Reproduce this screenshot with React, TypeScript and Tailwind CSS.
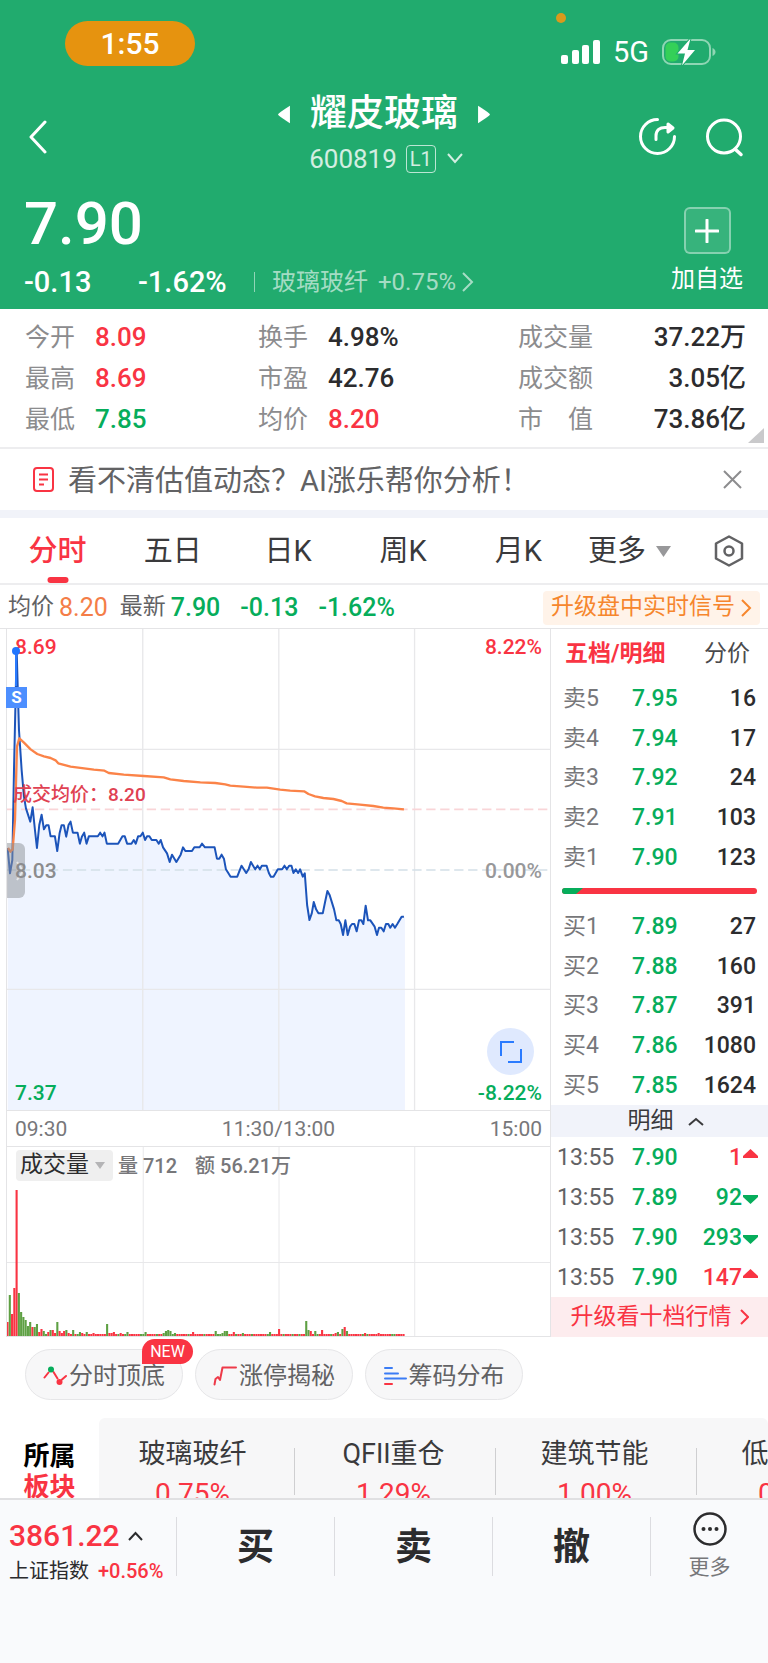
import { useState } from "react";
import clsx from "clsx";

type Trend = "up" | "down";

const stats = [
  [
    { label: "今开", value: "8.09", color: "text-[#f93443]" },
    { label: "最高", value: "8.69", color: "text-[#f93443]" },
    { label: "最低", value: "7.85", color: "text-[#06ad5b]" },
  ],
  [
    { label: "换手", value: "4.98%", color: "text-[#2c2c2e]" },
    { label: "市盈", value: "42.76", color: "text-[#2c2c2e]" },
    { label: "均价", value: "8.20", color: "text-[#f93443]" },
  ],
];

const totals = [
  { label: "成交量", value: "37.22万" },
  { label: "成交额", value: "3.05亿" },
  { label: "市　值", value: "73.86亿" },
];

const tabs = ["分时", "五日", "日K", "周K", "月K"];

const asks = [
  ["卖5", "7.95", "16"],
  ["卖4", "7.94", "17"],
  ["卖3", "7.92", "24"],
  ["卖2", "7.91", "103"],
  ["卖1", "7.90", "123"],
];

const bids = [
  ["买1", "7.89", "27"],
  ["买2", "7.88", "160"],
  ["买3", "7.87", "391"],
  ["买4", "7.86", "1080"],
  ["买5", "7.85", "1624"],
];

const ticks: { time: string; price: string; volume: string; trend: Trend }[] = [
  { time: "13:55", price: "7.90", volume: "1", trend: "up" },
  { time: "13:55", price: "7.89", volume: "92", trend: "down" },
  { time: "13:55", price: "7.90", volume: "293", trend: "down" },
  { time: "13:55", price: "7.90", volume: "147", trend: "up" },
];

const sectors = [
  { name: "玻璃玻纤", change: "0.75%" },
  { name: "QFII重仓", change: "1.29%" },
  { name: "建筑节能", change: "1.00%" },
  { name: "低碳经济", change: "0.83%" },
];

const pricePoints =
  "21,684 28,760 35,720 40,450 48,91 55,330 63,450 70,530 76,565 89,605 96,562 103,630 109,684 116,615 123,584 130,628 137,616 144,616 150,649 163,649 170,693 177,640 183,616 190,616 197,650 204,615 210,605 217,638 231,638 238,671 244,650 251,638 258,671 265,649 292,649 299,638 306,649 312,638 319,671 353,671 366,649 373,649 380,671 393,671 400,660 406,671 413,649 420,649 427,638 434,660 440,649 447,649 454,660 468,660 475,671 481,660 488,682 500,700 508,726 515,704 528,726 541,704 548,682 555,693 575,693 582,682 598,682 605,671 614,682 643,682 650,716 657,716 664,704 671,716 677,748 691,770 711,770 724,737 738,759 745,748 752,726 765,748 772,737 779,748 785,737 799,737 806,759 812,770 820,770 833,748 846,748 853,737 860,748 867,737 874,737 880,759 887,748 894,759 900,748 908,770 914,760 921,855 928,900 935,880 941,846 948,868 955,880 968,880 975,846 982,813 989,826 1002,868 1009,901 1016,901 1022,912 1029,945 1036,901 1043,945 1050,920 1056,912 1063,912 1070,934 1077,901 1084,901 1090,912 1097,857 1104,901 1111,901 1124,920 1131,945 1137,923 1144,923 1151,934 1158,912 1165,912 1171,923 1178,912 1185,923 1192,912 1205,890 1212,890";

const averagePoints =
  "22,684 29,695 36,688 43,600 49,380 56,355 70,368 90,388 110,402 130,409 150,414 165,421 173,430 210,440 280,449 312,452 325,459 370,464 430,468 490,472 510,478 550,483 600,487 645,489 675,493 690,497 730,500 770,503 800,503 840,509 870,512 912,514 925,522 945,529 970,534 1000,537 1025,543 1040,550 1080,554 1120,558 1150,563 1180,565 1212,568";

// minutes that stand out of the flat volume: index -> [height, trend]
const volumePeaks: Record<number, [number, Trend]> = {
  0: [14, "up"], 1: [41, "down"], 2: [22, "up"], 3: [48, "up"], 4: [146, "up"],
  5: [43, "down"], 6: [24, "down"], 7: [19, "down"], 8: [16, "down"], 9: [10, "down"],
  10: [14, "down"], 11: [9, "up"], 12: [9, "down"], 13: [12, "down"], 14: [4, "up"],
  15: [7, "up"], 16: [5, "down"], 18: [4, "up"], 19: [6, "down"], 20: [6, "up"], 21: [3, "up"],
  22: [14, "down"], 23: [5, "up"], 24: [3, "up"], 25: [5, "up"], 26: [6, "down"], 27: [3, "up"],
  29: [6, "down"], 32: [4, "down"], 33: [3, "up"], 35: [4, "down"], 38: [3, "up"], 44: [12, "down"],
  45: [3, "up"], 46: [3, "up"], 47: [4, "up"], 50: [3, "up"], 53: [4, "down"], 61: [4, "down"],
  69: [3, "down"], 70: [5, "down"], 71: [6, "down"], 72: [5, "down"], 74: [3, "down"],
  82: [4, "up"], 92: [5, "down"], 95: [3, "down"], 96: [5, "down"], 97: [5, "down"],
  100: [4, "up"], 104: [3, "down"], 116: [4, "down"], 120: [7, "up"], 132: [15, "down"],
  133: [6, "down"], 134: [5, "up"], 136: [5, "down"], 139: [6, "up"], 145: [3, "up"],
  146: [4, "down"], 148: [7, "down"], 149: [9, "up"], 150: [5, "down"], 158: [3, "up"], 164: [3, "up"],
};

const volumes = Array.from({ length: 176 }, (_, i): [number, Trend] =>
  volumePeaks[i] ?? [2, i % 7 === 3 || i % 11 === 5 ? "down" : "up"]
);

function StatusBar() {
  return (
    <div className="flex h-[88px] items-start justify-between pl-[65px] pr-[52px] pt-[21px]">
      <span className="flex h-[45px] w-[130px] items-center justify-center rounded-full bg-[#e6930f] pt-px text-[30px] leading-none font-medium">
        1:55
      </span>
      <div className="relative flex items-center gap-[13px] pt-[18px]">
        <span className="absolute -top-2 -left-[5px] size-[10px] rounded-full bg-[#d99a1c]" />
        <svg width="39" height="25" viewBox="0 0 39 25" fill="white">
          <rect x="0" y="15" width="7" height="9" rx="2" />
          <rect x="11" y="10" width="7" height="14" rx="2" />
          <rect x="21" y="5" width="7" height="19" rx="2" />
          <rect x="32" y="0" width="7" height="24" rx="2" />
        </svg>
        <span className="text-[29px] leading-[26px]">5G</span>
        <svg width="54" height="26" viewBox="0 0 54 26">
          <rect x="1" y="1" width="47" height="24" rx="8" fill="none" stroke="#8fd6b4" strokeWidth="2" />
          <path d="M50.500 9c4 1.500 4 6.500 0 8z" fill="#8fd6b4" />
          <rect x="3.500" y="3.500" width="13" height="19" rx="5" fill="#34d058" />
          <path d="M28.500-.500 15.500 14.500H23L20 26.500 33 11h-7.500z" fill="white" stroke="#21ab6e" strokeWidth="2" paintOrder="stroke" />
        </svg>
      </div>
    </div>
  );
}

function Header() {
  return (
    <header className="bg-[#21ab6e] text-white">
      <StatusBar />
      <div className="grid grid-cols-[1fr_auto_1fr] items-center px-6">
        <button aria-label="返回" className="w-fit p-1 pt-2">
          <svg width="20" height="34" viewBox="0 0 20 34" fill="none" stroke="white" strokeWidth="3" strokeLinecap="round" strokeLinejoin="round">
            <path d="M17 2 3 17l14 15" />
          </svg>
        </button>
        <div className="flex flex-col items-center">
          <div className="flex items-center gap-[19px]">
            <button aria-label="上一只">
              <svg width="13" height="19" viewBox="0 0 12 17" fill="white"><path d="M11 .500v16Q0 9.500 0 8.500T11 .500z" /></svg>
            </button>
            <h1 className="text-[37px] leading-[52px] font-medium">耀皮玻璃</h1>
            <button aria-label="下一只">
              <svg width="13" height="19" viewBox="0 0 12 17" fill="white"><path d="M1 .500v16Q12 9.500 12 8.500T1 .500z" /></svg>
            </button>
          </div>
          <button className="flex items-center gap-[9px] pb-1 pl-1 text-[26px] leading-[38px] text-white/80">
            600819
            <span className="flex h-7 w-[30px] items-center justify-center rounded border border-white/70 text-xl leading-none">L1</span>
            <svg width="16" height="12" viewBox="0 0 16 12" fill="none" stroke="currentColor" strokeWidth="2" className="ml-[2px]">
              <path d="m1 1 7 8 7-8" />
            </svg>
          </button>
        </div>
        <div className="flex justify-end gap-[28px] pt-1">
          <button aria-label="分享">
            <svg width="40" height="40" viewBox="0 0 40 40" fill="none" stroke="white" strokeWidth="3" strokeLinecap="round" strokeLinejoin="round">
              <path d="M21.500 2.500A17 17 0 1 0 38.500 19.500" />
              <path d="M20 22.500v-3.500c0-6 4-8.500 9-8.500h5" />
              <path d="m32 7 5 4-5 4z" fill="white" />
            </svg>
          </button>
          <button aria-label="搜索">
            <svg width="40" height="40" viewBox="0 0 40 40" fill="none" stroke="white" strokeWidth="3" strokeLinecap="round">
              <circle cx="20" cy="19.500" r="16.500" />
              <path d="m31.500 32.500 5.500 5" strokeWidth="3.500" />
            </svg>
          </button>
        </div>
      </div>
      <div className="flex h-[127px] items-end justify-between pb-[10px] pl-6 pr-[25px]">
        <div className="flex flex-col">
          <strong className="text-[60px] leading-[66px] font-medium">7.90</strong>
          <div className="mt-2 flex h-[34px] items-center text-[29px] leading-[34px] font-medium">
            <span className="w-[114px]">-0.13</span>
            <span className="w-[116px]">-1.62%</span>
            <span className="mr-[17px] h-5 w-px bg-white/50" />
            <a href="#sector" className="flex items-center text-2xl font-normal text-white/60">
              玻璃玻纤
              <span className="ml-[10px]">+0.75%</span>
              <svg width="12" height="20" viewBox="0 0 12 20" fill="none" stroke="currentColor" strokeWidth="2" className="ml-[6px]">
                <path d="m1 1 9 9-9 9" />
              </svg>
            </a>
          </div>
        </div>
        <button className="flex flex-col items-center gap-2 pb-[3px] text-2xl leading-[34px]">
          <span className="flex size-[47px] items-center justify-center rounded-md border-2 border-white/40 bg-white/10">
            <svg width="24" height="24" viewBox="0 0 24 24" stroke="white" strokeWidth="3" strokeLinecap="round">
              <path d="M12 1v22M1 12h22" />
            </svg>
          </span>
          加自选
        </button>
      </div>
    </header>
  );
}

function Stats() {
  return (
    <section className="relative grid grid-cols-[233fr_260fr_228fr] border-b-2 border-[#ededef] bg-white pt-2 pb-[7px] pl-[25px] pr-[22px] text-[26px]">
      {stats.map((column, i) => (
        <dl key={i}>
          {column.map((item) => (
            <div key={item.label} className="flex h-[41px] items-center gap-5">
              <dt className="text-[25px] text-[#8c8c8e]">{item.label}</dt>
              <dd className={clsx("font-medium", item.color)}>{item.value}</dd>
            </div>
          ))}
        </dl>
      ))}
      <dl>
        {totals.map((item) => (
          <div key={item.label} className="flex h-[41px] items-center justify-between">
            <dt className="text-[25px] text-[#8c8c8e]">{item.label}</dt>
            <dd className="font-medium text-[#2c2c2e]">{item.value}</dd>
          </div>
        ))}
      </dl>
      <svg width="16" height="15" viewBox="0 0 16 15" className="absolute right-1 bottom-1" fill="#c9c9cb"><path d="M16 0v15H0z" /></svg>
    </section>
  );
}

function Notice({ onClose }: { onClose: () => void }) {
  return (
    <section className="flex h-[61px] items-center bg-white pl-[33px] pr-[26px]">
      <svg width="21" height="25" viewBox="0 0 21 25" fill="none" stroke="#f93443" strokeWidth="2">
        <rect x="1" y="1" width="19" height="23" rx="3" />
        <path d="M6 7.500h9M6 12.500h9M6 17.500h5" />
      </svg>
      <a href="#ai" className="ml-[14px] pt-[2px] text-[29px] leading-10 text-[#626264]">看不清估值动态？AI涨乐帮你分析！</a>
      <button aria-label="关闭" className="ml-auto">
        <svg width="19" height="19" viewBox="0 0 19 19" stroke="#8c8c8e" strokeWidth="2"><path d="m1 1 17 17M18 1 1 18" /></svg>
      </button>
    </section>
  );
}

function ChartTabs({ active, onChange }: { active: string; onChange: (tab: string) => void }) {
  return (
    <nav className="grid h-[67px] grid-cols-[repeat(6,3fr)_2fr] border-b-2 border-[#ededef] bg-white text-[29px] text-[#3a3a3c]">
      {tabs.map((tab) => (
        <button
          key={tab}
          onClick={() => onChange(tab)}
          className={clsx("relative pt-[2px]", tab === active && "font-medium text-[#f93443]")}
        >
          {tab}
          {tab === active && (
            <span className="absolute bottom-0 left-1/2 h-[6px] w-[21px] -translate-x-1/2 rounded-full bg-[#f93443]" />
          )}
        </button>
      ))}
      <button className="flex items-center justify-center gap-[10px] pt-[2px] pr-2">
        更多
        <svg width="15" height="11" viewBox="0 0 15 11" fill="#98989a"><path d="M0 0h15L7.500 11z" /></svg>
      </button>
      <button aria-label="设置" className="flex items-center justify-center pr-[2px]">
        <svg width="30" height="32" viewBox="0 0 30 32" fill="none" stroke="#626264" strokeWidth="2.500" strokeLinejoin="round">
          <path d="M15 1.500 28 8.500v15l-13 7-13-7v-15z" />
          <circle cx="15" cy="16" r="4.500" />
        </svg>
      </button>
    </nav>
  );
}

function QuoteLine() {
  return (
    <div className="flex h-[43px] items-center bg-white px-2 pt-[2px] text-[25px]">
      <span className="text-[23px] text-[#626264]">均价</span>
      <span className="ml-[5px] text-[#f47d47]">8.20</span>
      <span className="ml-3 text-[23px] text-[#626264]">最新</span>
      <span className="ml-[5px] flex gap-5 font-medium text-[#06ad5b]">
        <span>7.90</span>
        <span>-0.13</span>
        <span>-1.62%</span>
      </span>
      <a href="#signal" className="ml-auto flex h-[34px] items-center gap-[6px] rounded bg-[#fff3e9] px-2 text-[23px] text-[#f6862d]">
        升级盘中实时信号
        <svg width="11" height="18" viewBox="0 0 11 18" fill="none" stroke="currentColor" strokeWidth="2"><path d="m1 1 8 8-8 8" /></svg>
      </a>
    </div>
  );
}

function PriceChart() {
  return (
    <div className="relative h-[481px] text-[21px] leading-6 font-medium">
      <svg className="absolute inset-0 size-full" viewBox="19 27 1632 1443" preserveAspectRatio="none" fill="none">
        <polygon points={`21,1470 ${pricePoints} 1215,890 1215,1470`} fill="#eff4ff" />
        <path d="M427 27v1443M836 27v1443M1244 27v1443M19 388h1632M19 1108h1632" stroke="#e8e8ea" strokeWidth="4" />
        <path d="M19 568h1632" stroke="#f9d5d8" strokeWidth="5" strokeDasharray="28 14" />
        <path d="M19 750h1632" stroke="#d3dfe8" strokeWidth="5" strokeDasharray="28 14" />
        <polyline points={pricePoints} stroke="#1c54ba" strokeWidth="6" strokeLinejoin="round" />
        <polyline points={averagePoints} stroke="#fb8348" strokeWidth="7" strokeLinejoin="round" />
      </svg>
      <span className="absolute top-[6px] left-2 text-[#f93443]">8.69</span>
      <span className="absolute top-[6px] right-2 text-[#f93443]">8.22%</span>
      <span className="absolute top-[154px] left-[6px] text-[19px] text-[#e04152]">成交均价：8.20</span>
      <button aria-label="展开" className="absolute top-[214px] left-0 flex h-[55px] w-[18px] items-center justify-end rounded-r-md bg-[#8c8f96]/50">
        <svg width="9" height="20" viewBox="0 0 9 20" fill="none" stroke="white" strokeOpacity=".6" strokeWidth="2"><path d="m1 1 6 9-6 9" /></svg>
      </button>
      <span className="absolute top-[230px] left-2 text-[#8c8c8e]">8.03</span>
      <span className="absolute top-[230px] right-2 text-[#98989a]">0.00%</span>
      <span className="absolute bottom-[5px] left-2 text-[#06ad5b]">7.37</span>
      <span className="absolute right-2 bottom-[5px] text-[#06ad5b]">-8.22%</span>
      <svg width="10" height="40" viewBox="0 0 10 40" className="absolute top-[17px] left-[4px]">
        <path d="M5 4v36" stroke="#2a7bff" strokeWidth="2" />
        <circle cx="5" cy="5" r="4" fill="#2176ff" />
      </svg>
      <span className="absolute top-[58px] -left-px flex size-[21px] items-center justify-center bg-[#4d8fff] text-[17px] leading-none font-bold text-white">S</span>
      <button aria-label="全屏" className="absolute right-4 bottom-[35px] flex size-[47px] items-center justify-center rounded-full bg-[#dfe9fe]">
        <svg width="22" height="22" viewBox="0 0 22 22" fill="none" stroke="#2a7bff" strokeWidth="2"><path d="M1 15V1h13M21 8v13H8" /></svg>
      </button>
    </div>
  );
}

function VolumeChart() {
  return (
    <div className="relative h-[189px]">
      <svg className="absolute inset-0 size-full" viewBox="0 0 544 189" preserveAspectRatio="none">
        <path d="M136.500 0v189M272.500 0v189M408.500 0v189M0 115.500h544" stroke="#e8e8ea" />
        {volumes.map(([height, trend], i) => (
          <rect key={i} x={i * 2.267 - 0.5} y={189 - height} width="2.100" height={height} fill={trend === "up" ? "#f93443" : "#5ea043"} />
        ))}
      </svg>
      <div className="relative flex items-center pt-[3px] pl-[9px] text-[20px] font-medium text-[#77777a]">
        <button className="flex h-[31px] items-center gap-[6px] rounded bg-[#efefef] pr-2 pl-1 text-[23px] font-normal text-[#2c2c2e]">
          成交量
          <svg width="10" height="7" viewBox="0 0 10 7" fill="#b4b4b6"><path d="M0 0h10L5 7z" /></svg>
        </button>
        <span className="ml-[5px]">量 712</span>
        <span className="ml-[18px]">额 56.21万</span>
      </div>
    </div>
  );
}

function BookTable({ rows, label }: { rows: string[][]; label: string }) {
  return (
    <table aria-label={label} className="h-[198px] w-full text-[23px] leading-none">
      <tbody>
        {rows.map(([level, price, volume]) => (
          <tr key={level}>
            <th scope="row" className="w-[81px] pl-3 text-left font-normal text-[#77777a]">{level}</th>
            <td className="font-medium text-[#06ad5b]">{price}</td>
            <td className="pr-3 text-right font-medium text-[#2c2c2e]">{volume}</td>
          </tr>
        ))}
      </tbody>
    </table>
  );
}

function OrderBook() {
  return (
    <aside className="flex w-[217px] shrink-0 flex-col text-[23px]">
      <div className="flex h-[50px] items-center justify-between pr-[18px] pl-[14px]">
        <button className="font-bold text-[#f93443]">五档/明细</button>
        <button className="text-[#4a4a4c]">分价</button>
      </div>
      <BookTable rows={asks} label="卖盘" />
      <div className="flex h-[30px] items-center pr-[11px] pb-[2px] pl-[11px]">
        <svg className="h-[6px] w-full rounded-full" viewBox="0 0 195 6" preserveAspectRatio="none">
          <rect width="195" height="6" fill="#f93443" />
          <path d="M0 0h21l-7 6H0z" fill="#06ad5b" />
        </svg>
      </div>
      <BookTable rows={bids} label="买盘" />
      <button className="flex h-[32px] items-center justify-center gap-[14px] bg-[#f1f3fa] pl-3 text-[#3a3a3c]">
        明细
        <svg width="16" height="9" viewBox="0 0 16 9" fill="none" stroke="currentColor" strokeWidth="2"><path d="m1 8 7-6 7 6" /></svg>
      </button>
      <table aria-label="明细" className="h-[160px] w-full leading-none">
        <tbody>
          {ticks.map((tick, i) => (
            <tr key={i}>
              <td className="w-[81px] pl-[6px] text-[#626264]">{tick.time}</td>
              <td className="font-medium text-[#06ad5b]">{tick.price}</td>
              <td className={clsx("pr-[10px] text-right font-medium", tick.trend === "up" ? "text-[#f93443]" : "text-[#06ad5b]")}>
                <span className="inline-flex items-center gap-px">
                  {tick.volume}
                  <svg width="15" height="9" viewBox="0 0 15 9" fill="currentColor" className={tick.trend === "up" ? "mb-2" : "mt-1"}>
                    {tick.trend === "up" ? <path d="M0 9h15v-2L7.500 0 0 7z" /> : <path d="M0 0h15v2L7.500 9 0 2z" />}
                  </svg>
                </span>
              </td>
            </tr>
          ))}
        </tbody>
      </table>
      <a href="#level2" className="flex h-[40px] items-center justify-center gap-2 bg-[#fdecee] text-[#f93443]">
        升级看十档行情
        <svg width="9" height="16" viewBox="0 0 9 16" fill="none" stroke="currentColor" strokeWidth="2"><path d="m1 1 7 7-7 7" /></svg>
      </a>
    </aside>
  );
}

function Tools() {
  const pill = "relative flex h-[51px] w-[158px] items-center justify-center gap-[2px] rounded-full border border-[#e6e6e8] bg-[#f7f7f8] pt-[2px]";
  return (
    <section className="flex gap-3 bg-white px-[25px] pt-3 pb-[18px] text-2xl text-[#626264]">
      <button className={pill}>
        <svg width="24" height="20" viewBox="0 0 24 20" fill="none" stroke="#f93443" strokeWidth="2" strokeLinecap="round">
          <path d="m1.500 11.500 4-5M10.500 6l4 6.500M19 13.500l4-3.500" />
          <circle cx="8" cy="3.500" r="3" fill="#06ad5b" stroke="none" />
          <circle cx="16.500" cy="16" r="3" fill="#f93443" stroke="none" />
        </svg>
        分时顶底
        <span className="absolute -top-[11px] -right-[11px] flex h-[25px] w-[51px] items-center justify-center rounded-full rounded-bl-none bg-[#f93443] text-base text-white">
          NEW
        </span>
      </button>
      <button className={pill}>
        <svg width="24" height="20" viewBox="0 0 24 20" fill="none" stroke="#ee3a49" strokeWidth="2" strokeLinecap="round" strokeLinejoin="round">
          <path d="M1.500 18.500 2.500 13l2.500-2 2 3L9.500 1.500H23" />
        </svg>
        涨停揭秘
      </button>
      <button className={pill}>
        <svg width="23" height="20" viewBox="0 0 23 20" fill="none" stroke="#3b7cf5" strokeWidth="2" strokeLinecap="round">
          <path d="M1 2h7M1 7.500h13M1 12.500h21" />
          <path d="M1 18h7" stroke="#f93443" />
        </svg>
        筹码分布
      </button>
    </section>
  );
}

function Sectors() {
  return (
    <section id="sector" className="flex h-[80px] overflow-hidden bg-white">
      <h2 className="w-[99px] shrink-0 pt-[23px] text-center text-[26px] leading-[31px] font-bold text-black">
        所属
        <br />
        <span className="text-[#f93443]">板块</span>
      </h2>
      <ul className="flex flex-1 overflow-hidden rounded-t-md bg-[#f7f7f8] pt-4 text-[#3a3a3c]">
        {sectors.map((sector, i) => (
          <li key={sector.name} className="relative w-[201px] shrink-0 text-center text-[27px] leading-10">
            {i > 0 && <span className="absolute top-[14px] -left-[6px] h-[47px] w-px bg-[#cfcfd1]" />}
            <a href="#sector" className="-ml-[14px] block">
              {sector.name}
              <span className="block text-[28px] leading-10 text-[#f93443]">{sector.change}</span>
            </a>
          </li>
        ))}
      </ul>
    </section>
  );
}

function TradeBar() {
  return (
    <nav className="grid grid-cols-[176fr_158fr_158fr_158fr_118fr] border-t-2 border-[#e0e0e2] pt-[17px] text-[#2c2c2e]">
      <a href="#index" className="flex h-[59px] flex-col justify-center pt-3 pl-[9px] whitespace-nowrap">
        <span className="flex items-center gap-2 text-[30px] leading-9 font-medium text-[#f93443]">
          3861.22
          <svg width="15" height="10" viewBox="0 0 15 10" fill="none" stroke="#2c2c2e" strokeWidth="2"><path d="m1 9 6.500-7L14 9" /></svg>
        </span>
        <span className="text-[20px] leading-[34px]">
          上证指数 <span className="ml-1 font-medium text-[#f93443]">+0.56%</span>
        </span>
      </a>
      {["买", "卖", "撤"].map((action) => (
        <button key={action} className="h-[59px] border-l border-[#dcdce0] pt-[2px] text-[37px] leading-none font-bold">{action}</button>
      ))}
      <button className="flex h-[59px] flex-col items-center border-l border-[#dcdce0] text-[21px] leading-[30px] text-[#77777a]">
        <svg width="34" height="34" viewBox="0 0 34 34" className="-mt-[5px] mb-[6px] shrink-0">
          <circle cx="17" cy="17" r="15.500" fill="none" stroke="#2c2c2e" strokeWidth="2.500" />
          <g fill="#2c2c2e">
            <circle cx="10.500" cy="17" r="2" />
            <circle cx="17" cy="17" r="2" />
            <circle cx="23.500" cy="17" r="2" />
          </g>
        </svg>
        更多
      </button>
    </nav>
  );
}

function App() {
  const [activeTab, setActiveTab] = useState("分时");
  const [showNotice, setShowNotice] = useState(true);

  return (
    <div className="min-h-screen bg-[#f9fafc] font-[Roboto,'Noto_Sans_CJK_SC',sans-serif]">
      <Header />
      <Stats />
      {showNotice && <Notice onClose={() => setShowNotice(false)} />}
      <div className="h-2 bg-[#f1f3f9]" />
      <ChartTabs active={activeTab} onChange={setActiveTab} />
      <QuoteLine />
      <main className="flex border-t border-[#e4e4e6] bg-white pl-[6px]">
        <div className="min-w-0 flex-1 border-x border-b border-[#e4e4e6]">
          <PriceChart />
          <div className="flex h-[37px] items-center justify-between border-y border-[#e4e4e6] px-2 pt-[2px] text-[21px] text-[#77777a]">
            <span>09:30</span>
            <span>11:30/13:00</span>
            <span>15:00</span>
          </div>
          <VolumeChart />
        </div>
        <OrderBook />
      </main>
      <Tools />
      <Sectors />
      <TradeBar />
    </div>
  );
}

export default App;
